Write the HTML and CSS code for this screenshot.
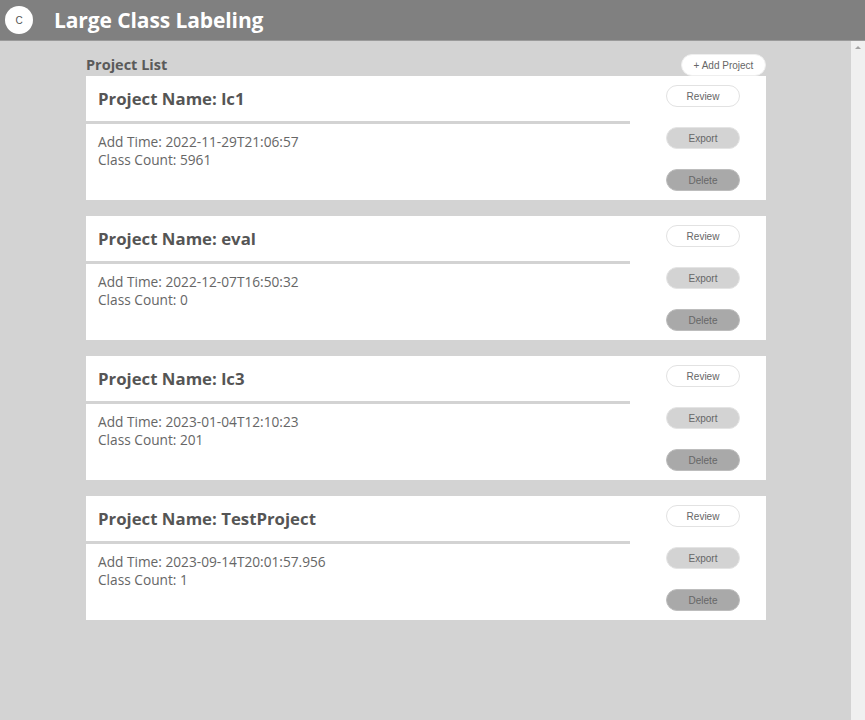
FILE: index.html
```html
<!DOCTYPE html>
<html>
<head>
<meta charset="utf-8">
<link rel="stylesheet" href="styles.css">
</head>
<body>
<header class="topbar">
  <div class="logo">C</div>
  <h1 class="app-title">Large Class Labeling</h1>
</header>
<div class="viewport">
  <main class="content">
    <div class="list-head">
      <h2 class="list-title">Project List</h2>
      <button class="btn btn-add">+ Add Project</button>
    </div>
    <section class="card">
      <div class="card-main">
        <div class="card-name">Project Name: lc1</div>
        <div class="card-info">
          <div>Add Time: 2022-11-29T21:06:57</div>
          <div>Class Count: 5961</div>
        </div>
      </div>
      <div class="card-actions">
        <button class="btn btn-review">Review</button>
        <button class="btn btn-export">Export</button>
        <button class="btn btn-delete">Delete</button>
      </div>
    </section>
    <section class="card">
      <div class="card-main">
        <div class="card-name">Project Name: eval</div>
        <div class="card-info">
          <div>Add Time: 2022-12-07T16:50:32</div>
          <div>Class Count: 0</div>
        </div>
      </div>
      <div class="card-actions">
        <button class="btn btn-review">Review</button>
        <button class="btn btn-export">Export</button>
        <button class="btn btn-delete">Delete</button>
      </div>
    </section>
    <section class="card">
      <div class="card-main">
        <div class="card-name">Project Name: lc3</div>
        <div class="card-info">
          <div>Add Time: 2023-01-04T12:10:23</div>
          <div>Class Count: 201</div>
        </div>
      </div>
      <div class="card-actions">
        <button class="btn btn-review">Review</button>
        <button class="btn btn-export">Export</button>
        <button class="btn btn-delete">Delete</button>
      </div>
    </section>
    <section class="card">
      <div class="card-main">
        <div class="card-name">Project Name: TestProject</div>
        <div class="card-info">
          <div>Add Time: 2023-09-14T20:01:57.956</div>
          <div>Class Count: 1</div>
        </div>
      </div>
      <div class="card-actions">
        <button class="btn btn-review">Review</button>
        <button class="btn btn-export">Export</button>
        <button class="btn btn-delete">Delete</button>
      </div>
    </section>
  </main>
  <div class="scrollbar"><span class="arrow"></span></div>
</div>
</body>
</html>
```
FILE: styles.css
```css
* { box-sizing: border-box; }
html, body { margin: 0; padding: 0; height: 100%; }
body {
  font-family: "Open Sans", "Noto Sans", sans-serif;
  background: #d3d3d3;
  display: flex;
  flex-direction: column;
  overflow: hidden;
}
.topbar {
  height: 41px;
  background: #808080;
  border-bottom: 1px solid #9a9a9a;
  display: flex;
  align-items: center;
  padding-left: 5px;
  flex: none;
}
.logo {
  width: 28px;
  height: 28px;
  border-radius: 50%;
  background: #fff;
  color: #555;
  font-family: "Liberation Sans", Arial, sans-serif;
  font-size: 10px;
  display: flex;
  align-items: center;
  justify-content: center;
}
.app-title {
  margin: 0 0 0 21px;
  color: #fff;
  font-size: 21px;
  font-weight: 700;
  letter-spacing: -0.1px;
}
.viewport {
  flex: 1;
  display: flex;
  min-height: 0;
}
.content {
  flex: 1;
  padding-top: 12px;
  padding-left: 1px;
}
.scrollbar {
  width: 14px;
  background: #f0f0f0;
  flex: none;
  display: flex;
  justify-content: center;
  padding-top: 5px;
}
.arrow {
  width: 0; height: 0;
  border-left: 3px solid transparent;
  border-right: 3px solid transparent;
  border-bottom: 3px solid #a3a3a3;
}
.list-head, .card {
  width: 680px;
  margin: 0 auto;
}
.list-head {
  display: flex;
  justify-content: space-between;
  align-items: flex-end;
  height: 23px;
}
.list-title {
  margin: 0 0 1px 0;
  font-size: 14.5px;
  font-weight: 700;
  color: #5a5a5a;
  line-height: 20px;
}
.btn {
  font-family: "Liberation Sans", Arial, sans-serif;
  font-size: 10px;
  color: #666;
  width: 74px;
  height: 22px;
  border-radius: 11px;
  border: 1px solid transparent;
  padding: 0;
}
.btn-add {
  width: 85px;
  background: #fff;
  border-color: #eee;
}
.btn-review { background: #fff; border-color: #e2e2e2; }
.btn-export { background: #d3d3d3; border-color: #e4e4e4; }
.btn-delete { background: #a9a9a9; border-color: #bdbdbd; }
.card {
  background: #fff;
  height: 124px;
  display: flex;
  margin-bottom: 16px;
}
.card-main {
  width: 544px;
}
.card-name {
  height: 48px;
  border-bottom: 3px solid #d3d3d3;
  padding-left: 12px;
  display: flex;
  align-items: center;
  font-size: 16.8px;
  font-weight: 700;
  color: #555;
}
.card-info {
  padding: 9px 0 0 12px;
  font-size: 13.7px;
  line-height: 18px;
  color: #666;
}
.card-actions {
  flex: 1;
  display: flex;
  flex-direction: column;
  align-items: center;
  gap: 20px;
  padding-top: 9px;
  padding-left: 10px;
}
```
